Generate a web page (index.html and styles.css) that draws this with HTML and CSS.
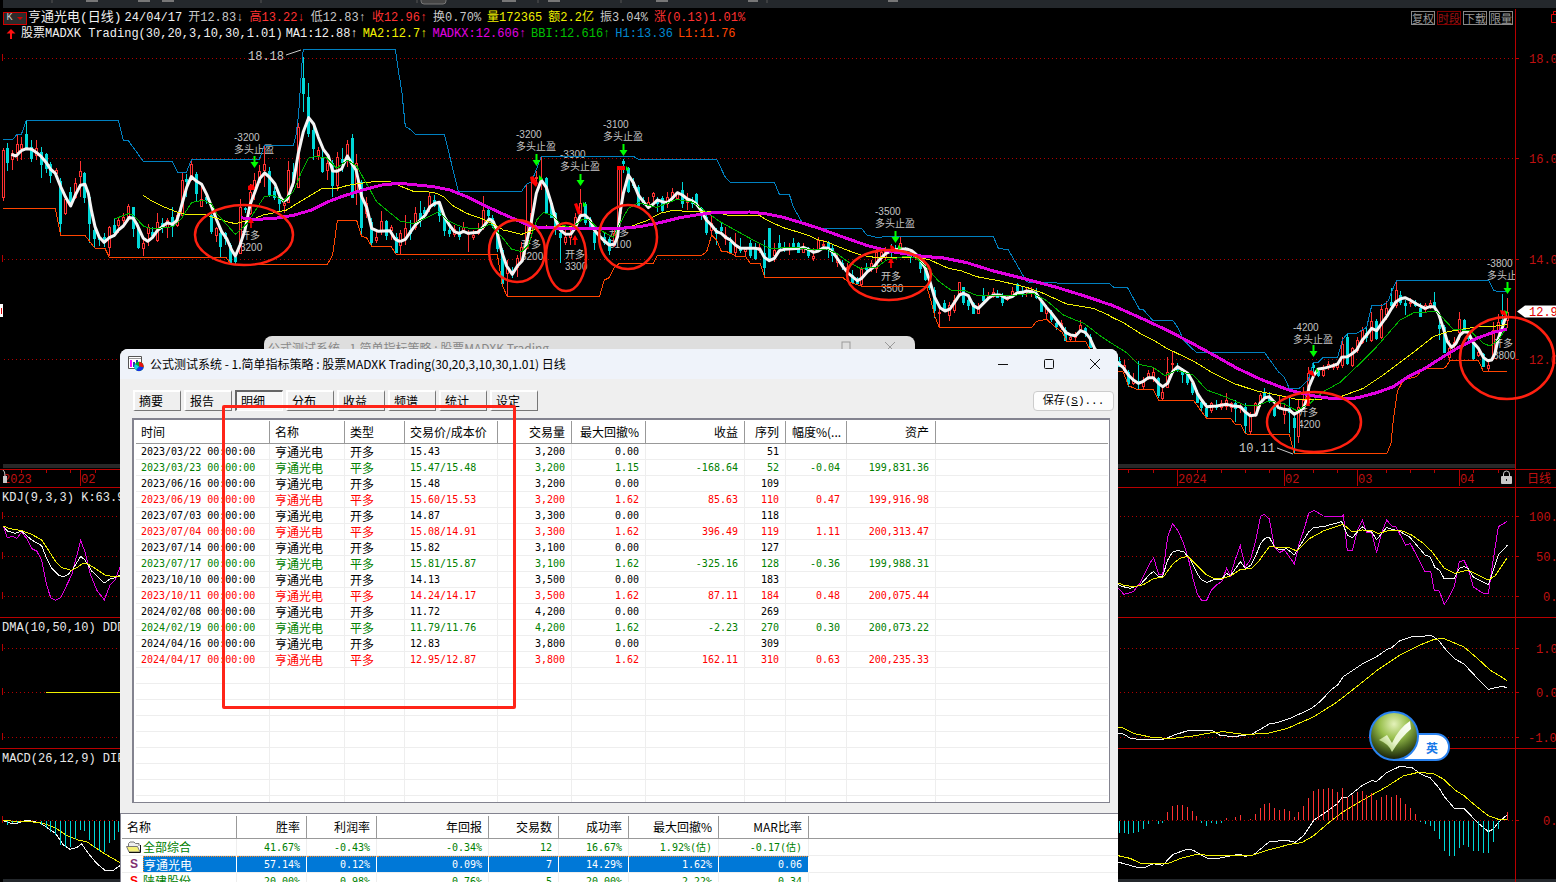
FILE: index.html
```html
<!DOCTYPE html>
<html lang="zh-CN">
<head>
<meta charset="utf-8">
<title>亨通光电 日线</title>
<link rel="stylesheet" href="styles.css">
</head>
<body>
<main class="desk">
  <svg class="chart" viewBox="0 0 1556 882" preserveAspectRatio="xMinYMin slice" role="img" aria-label="K线图">
    <defs>
      <path id="sell" d="M-.5-12h2v6h3L.5 0-3.5-6h3z"/>
      <path id="buy" d="M0 0l3 5H.8v5h-1.600v-5H-3z"/>
      <clipPath id="plot"><rect x="0" y="8" width="1515" height="874"/></clipPath>
      <radialGradient id="ball" cx=".5" cy=".25" r=".75"><stop offset="0" stop-color="#e4f2ba"/><stop offset=".4" stop-color="#98bf4c"/><stop offset=".72" stop-color="#4c6721"/><stop offset="1" stop-color="#141a08"/></radialGradient>
      <linearGradient id="tick" x1="1" y1="0" x2="0" y2="1"><stop offset="0" stop-color="#fff"/><stop offset=".6" stop-color="#e8f5cd"/><stop offset="1" stop-color="#8db844"/></linearGradient>
    </defs>
    <rect class="strip" x="3" y="0" width="1553" height="8"/>
    <path class="nubs" d="M86 0h12M138 0h12M162 0h12M502 0h14M548 0h12M656 0h12M748 0h10M888 0h10"/>
    <path class="nubs faint" d="M52 0v3M261 0v3M417 0v3M538 0v3M621 0v3M767 0v3"/>
    <rect class="nub-on" x="421" y="-6" width="25" height="10" rx="3"/>
    <rect class="strip" x="3" y="879" width="1553" height="3"/>
    <rect class="band" x="3" y="464" width="1512" height="4"/>

    <path class="dots" d="M4 58.500H1515M4 158.500H1515M4 259.500H1515M4 359.500H1515M4 516.500H1515M4 556.500H1515M4 596.500H1515M4 648.500H1515M4 692.500H1515M4 737.500H1515M4 820.500H1515"/>
    <path class="axis" d="M1515.500 9V882M0 469.500H1556M0 487.500H1556M0 617.500H1556M0 748.500H1556
      M1515 58.500h4M1515 158.500h4M1515 259.500h4M1515 359.500h4M1515 516.500h4M1515 556.500h4M1515 596.500h4M1515 648.500h4M1515 692.500h4M1515 737.500h4M1515 820.500h4
      M2.500 54v7M2.500 154v7M2.500 255v7M2.500 512v7M2.500 552v7M2.500 592v7M2.500 644v7M2.500 688v7M2.500 733v7M2.500 816v7
      M21.500 470v3M46.500 470v3M70.500 470v3M95.500 470v3M80.500 470v16M1177.500 470v16M1284.500 470v16M1357.500 470v16M1459.500 470v16
      M1128.500 470v3M1153.500 470v3M1197.500 470v3M1221.500 470v3M1245.500 470v3M1269.500 470v3M1313.500 470v3M1337.500 470v3M1386.500 470v3M1410.500 470v3M1434.500 470v3M1473.500 470v3M1498.500 470v3"/>
    <g class="scale">
      <text x="1529" y="63">18.00</text><text x="1529" y="163">16.00</text><text x="1529" y="264">14.00</text><text x="1529" y="364">12.00</text>
      <text x="1529" y="521">100.0</text><text x="1536" y="561">50.0</text><text x="1543" y="601">0.0</text>
      <text x="1536" y="653">1.00</text><text x="1536" y="697">0.00</text><text x="1528" y="742">-1.00</text><text x="1543" y="825">0.0</text>
      <text x="3" y="483">2023</text><text x="81" y="483">02</text><text x="1178" y="483">2024</text><text x="1285" y="483">02</text><text x="1358" y="483">03</text><text x="1460" y="483">04</text><text x="1527" y="483">日线</text>
    </g>
    <g class="captions"><text x="2" y="501">KDJ(9,3,3) K:63.9</text><text x="2" y="631">DMA(10,50,10) DDD</text><text x="2" y="762">MACD(26,12,9) DIF</text></g>

    <g class="notes">
      <text x="234" y="141">-3200</text><text x="234" y="153">多头止盈</text>
      <text x="516" y="138">-3200</text><text x="516" y="150">多头止盈</text>
      <text x="560" y="158">-3300</text><text x="560" y="170">多头止盈</text>
      <text x="603" y="128">-3100</text><text x="603" y="140">多头止盈</text>
      <text x="875" y="215">-3500</text><text x="875" y="227">多头止盈</text>
      <text x="1293" y="331">-4200</text><text x="1293" y="343">多头止盈</text>
      <g clip-path="url(#plot)"><text x="1487" y="267">-3800</text><text x="1487" y="279">多头止盈</text></g>
      <text x="240" y="239">开多</text><text x="240" y="251">3200</text>
      <text x="521" y="248">开多</text><text x="521" y="260">3200</text>
      <text x="565" y="258">开多</text><text x="565" y="270">3300</text>
      <text x="609" y="236">开多</text><text x="609" y="248">3100</text>
      <text x="881" y="280">开多</text><text x="881" y="292">3500</text>
      <text x="1298" y="416">开多</text><text x="1298" y="428">4200</text>
      <text x="1493" y="347">开多</text><text x="1493" y="359">3800</text>
    </g>
    <g class="peak"><text x="248" y="60">18.18</text><text x="1239" y="452">10.11</text><path d="M286 55l15-5M1277 448l16 6"/></g>

    <g id="candles"></g>

    <g class="lines" transform="scale(.33333)">
      <path class="hi" d="M10 418L39 418 50 404 64 403 79 361 355 361 370 420 385 422 430 484 517 484 533 517 559 517 575 478 778 478 793 436 880 436 888 405 896 340 908 160 911 148 1186 148 1192 190 1199 240"/>
      <path class="lo" d="M10 625L166 625 182 706 255 706 284 744 315 745 328 772 678 772 693 793 982 793 998 765 1012 661 1070 661 1085 710 1099 712 1115 739 1173 739 1188 763 1200 763"/>
      <path class="ma1" d="M34 463L48 468 64 452 79 446 95 448 110 458 124 470 139 488 151 507 166 520 182 560 197 592 212 618 226 585 241 556 255 553 265 580 275 635 285 680 297 710 312 727 328 713 343 706 355 690 370 678 388 652 400 655 410 672 430 715 443 724 457 713 472 692 487 680 502 668 517 673 530 662 541 630 560 562 574 530 590 544 605 553 620 583 636 623 650 660 665 695 680 716 695 750 706 768 720 735 735 690 750 615 765 575 780 535 794 519 808 531 825 552 840 590 850 603 862 598 880 548 895 460 910 395 926 353 941 372 955 412 970 448 985 468 998 513 1010 514 1025 507 1042 468 1055 490 1068 510 1075 540 1085 590 1100 622 1115 685 1135 694 1170 692 1185 717 1200 725"/>
      <path class="ma2" d="M430 586L455 603 490 620 530 636 560 643 610 643 650 655 680 665 706 671 730 665 763 656 790 645 860 630 900 605 965 566 1012 565 1040 557 1080 550 1140 543 1170 545 1200 558"/>
      <path class="bbi" d="M343 657L385 641 400 645 430 678 457 687 520 680 545 655 575 607 610 601 635 612 650 640 706 703 740 672 793 590 820 585 850 603 880 575 905 515 925 475 945 469 980 474 1010 505 1042 480 1070 498 1099 550 1130 605 1160 630 1200 663"/>
      <path class="mad" d="M722 653L760 658 820 656 880 646 935 630 985 605 1030 588 1100 567 1150 554 1200 550"/>
    </g>
    <g class="lines" transform="translate(400 0) scale(.33333)">
      <path class="hi" d="M0 240L6 280 16 380 30 388 46 403 133 403 175 574 365 574 380 552 395 545 424 469 700 469 715 478 950 478 975 530 991 547 1123 547 1138 583 1168 583 1180 620 1200 657"/>
      <path class="lo" d="M0 763L292 763 307 855 322 891 598 891 613 840 628 833 643 803 658 790 760 790 772 766 905 766 920 755 935 705 950 720 964 754 980 755 1010 769 1036 769 1051 790 1080 790 1094 832 1200 832"/>
      <path class="ma1" d="M0 725L16 718 30 698 46 675 61 660 76 645 90 620 105 610 118 607 133 650 148 675 163 695 178 700 190 694 205 700 235 697 250 680 268 657 280 665 290 690 305 755 320 798 337 823 352 798 367 782 379 730 394 665 409 580 424 540 439 562 454 610 467 660 481 690 497 703 513 702 526 683 541 647 555 645 570 660 583 690 600 710 613 723 628 735 643 733 653 710 660 640 670 580 685 525 700 548 715 585 730 605 745 623 760 612 772 600 787 605 802 608 817 595 832 578 847 585 862 597 877 603 889 612 904 633 919 660 934 675 950 695 964 700 977 712 991 720 1006 735 1021 745 1066 745 1080 748 1093 772 1108 782 1123 775 1138 752 1153 748 1200 745"/>
      <path class="ma2" d="M0 558L40 574 80 575 110 580 130 590 160 618 200 640 250 658 280 672 310 690 365 703 400 690 420 680 440 678 650 685 690 680 740 662 780 640 820 631 870 635 940 635 980 645 1080 647 1100 660 1150 683 1200 698"/>
      <path class="bbi" d="M0 663L40 671 75 655 115 635 145 663 190 683 240 687 270 672 305 710 335 748 365 755 385 735 410 660 430 637 460 648 485 675 515 683 545 660 565 658 600 690 640 712 660 670 685 625 715 608 770 622 830 598 880 607 915 633 960 665 1050 715 1110 745 1200 742"/>
      <path class="mad" d="M0 550L50 555 100 560 150 570 200 590 250 615 300 638 350 660 385 675 420 683 500 685 650 686 720 680 780 668 840 653 900 643 950 637 1050 636 1100 642 1150 652 1200 667"/>
    </g>
    <g class="lines" transform="translate(780 180) scale(.33333)">
      <path class="hi" d="M60 117L70 133 110 145 245 145 260 165 290 172 320 170 640 170 655 205 685 209 740 306 820 307 835 310 990 310"/>
      <path class="lo" d="M60 292L188 292 203 305 245 319 440 319 455 370 465 410 478 442 755 442 770 424 800 418 830 445 845 455 860 484 917 484 931 510 990 570"/>
      <path class="ma1" d="M60 205L70 202 85 208 100 217 115 213 130 203 145 205 160 218 175 240 190 262 205 280 220 292 232 302 245 295 262 275 280 262 300 237 318 220 340 210 358 207 380 207 395 212 410 225 421 240 436 265 450 305 463 350 480 383 495 393 510 387 523 368 538 345 550 340 565 347 580 377 595 385 610 370 625 355 640 345 660 345 680 355 697 350 712 338 727 337 740 333 755 335 768 340 784 362 800 383 815 400 830 420 845 440 857 457 872 465 887 467 901 452 916 457 930 475 945 508 990 540"/>
      <path class="ma2" d="M60 158L90 168 110 178 140 186 200 210 245 226 290 233 420 232 450 240 505 265 545 273 590 290 660 303 740 322 790 340 860 372 940 385 990 407"/>
      <path class="bbi" d="M60 204L100 210 140 207 170 220 200 243 240 265 290 262 320 240 380 228 410 235 440 262 475 303 515 332 550 330 595 348 680 348 760 340 800 362 850 405 915 432 960 467 990 487"/>
      <path class="mad" d="M60 127L120 146 200 175 260 196 330 214 400 225 430 229 490 234 560 248 640 273 740 298 830 322 920 350 990 374"/>
    </g>
    <g class="lines" transform="translate(1110 240) scale(.33333)">
      <path class="hi" d="M0 133L12 142 52 142 88 207 100 209 128 241 188 241 205 265 220 300 245 325 260 337 463 337 505 395 523 412 538 445 568 445 595 420 610 367 625 367 640 352 683 352 697 300 712 281 742 279 770 262 785 197 820 195 835 183 845 155 860 121 1136 121 1150 150 1160 154 1192 154"/>
      <path class="lo" d="M0 390L40 396 55 437 85 450 130 450 146 481 250 481 290 535 362 535 375 552 392 553 406 582 538 583 553 642 830 642 843 610 850 540 862 455 880 420 920 410 938 385 1005 384 1020 361 1105 361 1120 394 1192 394"/>
      <path class="ma1" d="M0 345L28 373 40 383 55 405 70 420 85 430 100 424 115 413 130 413 145 430 158 440 173 430 188 395 203 380 218 390 233 400 248 425 262 460 275 480 290 500 320 498 350 493 365 497 392 500 405 515 420 527 438 525 450 490 465 473 478 470 492 485 505 503 523 508 538 510 553 523 565 515 580 505 590 480 597 440 612 405 625 387 640 385 660 380 683 372 695 352 712 350 725 342 740 330 757 300 770 285 785 265 800 272 815 250 830 230 845 205 858 185 872 176 885 173 900 180 920 192 945 205 960 200 972 200 985 220 1000 265 1012 305 1025 322 1038 310 1050 285 1062 275 1075 277 1088 305 1105 325 1120 352 1133 362 1145 360 1155 340 1165 295 1178 260 1185 237 1192 228"/>
      <path class="ma2" d="M0 229L40 248 90 280 130 300 170 325 250 363 310 400 370 430 440 453 510 467 570 480 680 475 700 467 760 445 820 405 900 345 970 290 1015 275 1060 267 1100 261 1140 260 1192 254"/>
      <path class="bbi" d="M0 307L50 338 85 373 130 382 165 407 200 391 250 405 290 450 340 468 410 498 440 498 475 483 520 490 560 512 600 490 640 455 690 427 740 380 800 320 870 240 910 219 980 214 1030 268 1080 272 1120 310 1140 318 1165 300 1192 260"/>
      <path class="mad" d="M0 193L50 215 110 242 180 275 250 312 320 350 380 384 450 417 530 448 600 466 660 475 740 474 800 458 850 440 900 407 940 388 1000 350 1050 320 1100 295 1150 277 1192 267"/>
    </g>

    <g class="sell"><use href="#sell" x="254" y="168"/><use href="#sell" x="536" y="166"/><use href="#sell" x="580" y="186"/><use href="#sell" x="623" y="156"/><use href="#sell" x="895" y="243"/><use href="#sell" x="1313" y="357"/><use href="#sell" x="1507" y="294"/>
      <path d="M539 175l4 4-4 2zM583 202l4 3-4 2zM626 166l3 3-3 2zM898 245l4 3-4 2zM1316 368l3 3-3 2zM1504 310l4 2-2 4z"/></g>
    <g class="buy"><use href="#buy" x="251" y="218"/><use href="#buy" x="575" y="235"/><use href="#buy" x="891" y="258"/><use href="#buy" x="1308" y="394"/>
      <path d="M248 186l4-2 3 3-1 3h-6zM530 177l3-1 5 7-2 4-5-5zM574 204l3-1 4 9-3 3zM617 166h8v4h-8zM890 245l3 1 4 5-6 1zM1308 370l5 1 2 6-6-3zM1500 310l5 1 2 6-6-3zM1308 398l2 8h-4z"/></g>

    <g class="lines" transform="translate(0 450) scale(.33333)">
      <path class="mad thin" d="M10 228L22 263 37 259 50 265 65 247 80 265 95 296 110 303 125 330 140 405 152 443 167 451 182 443 215 375 242 272 255 305 270 370 290 420 313 450 330 405 345 390 360 352"/>
      <path class="ma1 thin" d="M10 228L22 243 45 250 65 244 95 270 125 287 140 325 155 355 175 375 190 380 205 373 220 355 242 319 255 330 275 363 313 399 330 387 345 383 360 375"/>
      <path class="ma2" d="M10 228L30 236 65 242 95 253 125 270 145 300 165 332 185 353 215 361 235 350 250 339 262 341 290 358 315 375 340 380 360 380"/>
      <path class="ma2" d="M138 727H360"/>
      <path class="ma1 thin" d="M10 1112L35 1121 55 1119 80 1111 120 1118 150 1139 167 1150 190 1185 210 1198 230 1193 245 1182 265 1210 290 1240 315 1261 340 1261 360 1247"/>
      <path class="ma2" d="M10 1112L100 1116 130 1120 165 1133 200 1156 235 1170 260 1175 315 1212 360 1238"/>
      <path class="down" d="M22 1112V1124M37 1112V1120M52 1112V1119M124 1112V1126M139 1112V1135M151 1112V1145M166 1112V1154M181 1112V1186M196 1112V1190M211 1112V1192M226 1112V1168M241 1112V1140M254 1112V1142M268 1112V1170M283 1112V1195M298 1112V1204M313 1112V1206M328 1112V1180M343 1112V1170M355 1112V1145"/>
    </g>
    <g class="lines" transform="translate(1110 490) scale(.33333)">
      <path class="mad thin" d="M15 285L42 313 70 305 90 280 118 222 131 204 146 253 158 254 173 140 188 101 204 122 220 158 236 210 250 270 262 312 275 331 290 331 305 299 320 284 335 275 350 234 361 258 376 208 391 167 406 231 422 208 436 156 452 78 462 73 478 87 493 170 508 188 523 180 540 203 553 222 568 158 580 125 596 70 612 61 640 78 695 80 700 75 712 181 727 181 742 122 757 90 770 128 785 128 800 188 815 128 830 90 845 108 858 110 887 166 901 160 945 245 962 243 973 302 988 303 1003 343 1016 323 1033 290 1048 215 1062 211 1075 238 1090 291 1120 310 1135 310 1148 220 1165 110 1192 94"/>
      <path class="ma1 thin" d="M15 279L35 289 60 295 90 285 118 254 131 244 146 260 158 258 173 210 188 186 204 181 222 186 240 207 262 252 275 270 290 277 310 270 335 267 350 250 361 258 391 215 406 235 422 226 436 200 452 160 465 145 478 142 493 170 508 180 530 176 553 195 568 170 596 126 612 112 640 110 695 95 712 135 727 143 742 126 757 110 772 124 785 126 800 149 830 112 845 118 865 122 900 142 945 195 960 200 975 233 988 240 1003 267 1033 266 1048 235 1062 230 1075 236 1090 261 1135 284 1165 195 1192 166"/>
      <path class="ma2" d="M15 275L40 285 70 290 100 284 130 266 160 261 190 220 215 202 235 200 260 225 290 255 310 264 335 266 365 256 391 238 425 236 445 215 478 170 510 172 540 174 560 183 600 145 640 123 700 103 727 126 757 120 785 121 805 131 830 123 870 120 905 135 940 160 965 184 1003 235 1033 250 1075 240 1135 270 1155 258 1192 203"/>
      <path class="ma1 thin" d="M15 728L40 732 60 744 85 748 165 747 190 736 230 723 305 721 330 736 370 740 425 733 478 702 500 698 545 683 605 655 630 635 665 598 683 585 700 560 760 520 800 500 830 479 845 473 868 453 905 440 965 437 985 450 1003 474 1035 507 1062 522 1090 552 1135 598 1175 589 1192 593"/>
      <path class="ma2" d="M15 709L40 714 70 730 120 741 180 746 250 738 300 729 340 725 400 733 470 731 530 716 610 681 680 637 740 590 800 542 870 495 930 465 970 449 1000 445 1062 471 1100 503 1140 540 1192 572"/>
      <path class="ma1 thin" d="M15 1114L50 1123 80 1132 105 1132 130 1121 158 1126 188 1094 232 1077 250 1081 290 1104 325 1105 390 1092 405 1099 430 1095 478 1055 530 1051 555 1057 580 1038 612 990 650 965 683 940 697 921 712 922 757 886 785 872 800 874 830 848 868 830 905 832 935 854 960 863 988 895 1003 920 1033 955 1062 955 1105 1000 1135 1025 1150 1017 1165 997 1192 974"/>
      <path class="ma2" d="M15 1095L60 1105 90 1119 170 1122 215 1104 260 1093 320 1098 430 1095 478 1079 540 1063 575 1058 610 1038 660 995 700 965 750 935 830 890 880 858 925 847 970 851 1000 867 1035 900 1062 917 1100 950 1135 977 1165 988 1192 987"/>
      <path class="up" d="M172 991V966M187 991V947M202 991V944M217 991V944M232 991V950M247 991V963M260 991V978M349 991V984M376 991V982M391 991V974M422 991V986M436 991V972M451 991V955M463 991V941M478 991V938M493 991V953M508 991V961M523 991V957M538 991V963M553 991V982M565 991V966M580 991V948M595 991V923M610 991V903M625 991V896M640 991V896M655 991V893M667 991V898M682 991V905M697 991V893M712 991V920M727 991V915M742 991V907M757 991V903M770 991V915M785 991V910M799 991V930M814 991V922M829 991V915M844 991V920M859 991V915M871 991V923M886 991V942M901 991V953M916 991V973M1192 991V966"/>
      <path class="down" d="M28 993V1028M43 993V1028M55 993V1031M70 993V1028M85 993V1026M100 993V1017M115 993V1002M146 993V1002M158 993V1000M275 993V998M290 993V1007M305 993V1000M320 993V1002M335 993V998M931 993V997M946 993V1002M961 993V1007M973 993V1022M988 993V1047M1003 993V1084M1018 993V1097M1033 993V1097M1048 993V1073M1062 993V1066M1075 993V1070M1090 993V1082M1105 993V1082M1120 993V1088M1135 993V1088M1150 993V1055M1165 993V1017"/>
    </g>

    <path class="tag" d="M1517 311.500l8-6h31v12h-31z"/><text class="tag-text" x="1529" y="316">12.96</text>
    <g class="rings"><ellipse cx="244" cy="235" rx="49" ry="30"/><ellipse cx="517" cy="251" rx="28" ry="31"/><ellipse cx="566" cy="257" rx="20" ry="34"/><ellipse cx="628" cy="237" rx="29" ry="32"/><ellipse cx="889" cy="275" rx="42" ry="25"/><ellipse cx="1314" cy="422" rx="47" ry="30"/><ellipse cx="1507" cy="358" rx="47" ry="41"/></g>
    <g class="lock"><rect x="1501" y="476" width="11" height="8" rx="1"/><path d="M1503.500 476v-2q0-3 3-3t3 3v2"/><rect class="hole" x="1506" y="479" width="1" height="2"/><rect x="3" y="476" width="4" height="7"/><path d="M3 470q2 1 2 6"/></g>
    <path class="left-mark" d="M0 304h3v13H0z"/><path class="left-red" d="M1.500 308v6"/>
    <path class="corner" d="M1556 14.500h-4.500v8h4.500M1553.500 14v-2.500h2.500"/>
    <g class="ime"><path d="M1394 734h42a13 13 0 0 1 0 26h-42z"/><text x="1426" y="753">英</text><circle cx="1394" cy="736" r="24"/><path class="check" d="M1379 740l8-5 5 8q7-15 18-22l1 8q-10 8-19 23-3-8-13-12z"/></g>
  </svg>

  <header class="quote">
    <div class="row first">
      <button class="kbtn" type="button" aria-label="K线类型"><span>K</span><i></i></button>
      <span class="name">亨通光电(日线)</span><span>24/04/17</span><span class="dim">开12.83↓</span><span class="rise">高13.22↓</span><span class="dim">低12.83↑</span><span class="rise">收12.96↑</span><span class="dim">换0.70%</span><span class="gold">量172365</span><span class="gold">额2.2亿</span><span class="dim">振3.04%</span><span class="rise">涨(0.13)1.01%</span>
      <nav class="tools"><button type="button">复权</button><button type="button" class="on">时段</button><button type="button">下载</button><button type="button">限量</button></nav>
    </div>
    <div class="row second">
      <svg class="uparrow" viewBox="0 0 10 10" width="10" height="10"><path d="M5 0l4.500 4.500H6V10H4V4.500H.5z"/></svg>
      <span class="formula">股票MADXK Trading(30,20,3,10,30,1.01)</span><span>MA1:12.88↑</span><span class="gold">MA2:12.7↑</span><span class="pink">MADKX:12.606↑</span><span class="green">BBI:12.616↑</span><span class="blue">H1:13.36</span><span class="orange">L1:11.76</span>
    </div>
  </header>

  <section class="ghost"><span>公式测试系统 - 1.简单指标策略 : 股票MADXK Trading</span><svg viewBox="0 0 60 14" width="60" height="14"><path d="M0 12h9M44 3l10 10M54 3l-10 10"/><rect x="1" y="3" width="8" height="8"/></svg></section>

  <section class="dialog">
    <div class="titlebar">
      <svg class="appicon" viewBox="0 0 16 16" width="16" height="16"><path fill="#fff" stroke="#555" d="M.5.5h13v12H.5z"/><path stroke="#999" d="M1 2.500h12"/><path fill="#f0f" d="M2 4h2v7H2z"/><path fill="#2233b5" d="M5 6h2v5H5zM8 4h2v5H8z"/><circle cx="11" cy="10.500" r="4.700" fill="#00aa20"/><path fill="#e81010" d="M11 10.500V5.800a4.700 4.700 0 0 1 4.600 5.500z"/><path fill="#1530e8" d="M11 10.500l4.600.8A4.700 4.700 0 0 1 8 14z"/><path fill="#14cbe8" d="M11 10.500L8 14a4.700 4.700 0 0 1-1-6z"/></svg>
      <h1>公式测试系统 - 1.简单指标策略 : 股票MADXK Trading(30,20,3,10,30,1.01) 日线</h1>
      <div class="winbtns">
        <button type="button" aria-label="最小化"><svg viewBox="0 0 12 12" width="12" height="12"><path d="M1 6.500h10"/></svg></button>
        <button type="button" aria-label="最大化"><svg viewBox="0 0 12 12" width="12" height="12"><rect x="1.500" y="1.500" width="9" height="9" rx="1"/></svg></button>
        <button type="button" aria-label="关闭"><svg viewBox="0 0 12 12" width="12" height="12"><path d="M1 1l10 10M11 1L1 11"/></svg></button>
      </div>
    </div>
    <div class="bar">
      <div class="tabs"><button type="button">摘要</button><button type="button">报告</button><button type="button" class="on">明细</button><button type="button">分布</button><button type="button">收益</button><button type="button">频谱</button><button type="button">统计</button><button type="button">设定</button></div>
      <button type="button" class="save">保存(<u>S</u>)...</button>
    </div>
    <div class="listbox">
      <table class="grid detail">
        <colgroup><col class="w134"><col class="w75"><col class="w60"><col class="w93"><col class="w74"><col class="w74"><col class="w99"><col class="w41"><col class="w61"><col class="w89"><col></colgroup>
        <thead><tr><th>时间</th><th>名称</th><th>类型</th><th>交易价/成本价</th><th>交易量</th><th>最大回撤%</th><th>收益</th><th>序列</th><th>幅度%(...</th><th>资产</th><th></th></tr></thead>
        <tbody id="trades"></tbody>
      </table>
    </div>
    <div class="summary">
      <table class="grid stats">
        <colgroup><col class="w115"><col class="w70"><col class="w70"><col class="w112"><col class="w70"><col class="w70"><col class="w90"><col class="w90"><col></colgroup>
        <thead><tr><th>名称</th><th>胜率</th><th>利润率</th><th>年回报</th><th>交易数</th><th>成功率</th><th>最大回撤%</th><th>MAR比率</th><th></th></tr></thead>
        <tbody>
          <tr><td><span class="stock"><svg viewBox="0 0 16 12" width="16" height="12"><path fill="#eee" stroke="#777" d="M2.500 5V2.500L4 1h4l1.500 1.500H13V5"/><path fill="#f5f078" stroke="#777" d="M.5 5.500h11l2.500 5.500H3z"/><path stroke="#111" d="M14.500 4v7.500H3"/></svg>全部综合</span></td><td>41.67%</td><td>-0.43%</td><td>-0.34%</td><td>12</td><td>16.67%</td><td>1.92%(估)</td><td>-0.17(估)</td><td></td></tr>
          <tr class="picked"><td><span class="stock"><b>S</b><em>亨通光电</em></span></td><td>57.14%</td><td>0.12%</td><td>0.09%</td><td>7</td><td>14.29%</td><td>1.62%</td><td>0.06</td><td></td></tr>
          <tr><td><span class="stock"><b class="red">S</b>陕建股份</span></td><td>20.00%</td><td>-0.98%</td><td>-0.76%</td><td>5</td><td>20.00%</td><td>2.22%</td><td>-0.34</td><td></td></tr>
        </tbody>
      </table>
    </div>
    <div class="marker"></div>
  </section>
</main>
<script src="app.js"></script>
</body>
</html>
```
FILE: styles.css
```css
* { box-sizing: border-box; }
body { margin: 0; background: #000; font-family: "Liberation Mono", "Noto Sans CJK SC", monospace; font-size: 12px; color: #f0f0f0; }
button { font: inherit; margin: 0; padding: 0; }
.desk { position: relative; display: grid; height: 100vh; overflow: hidden; }
.chart { grid-area: 1 / 1; width: 100%; height: 100%; min-height: 0; }
.chart text { white-space: pre; }
.strip { fill: #24282c; }
.nubs { stroke: #777; stroke-width: 4; }
.nubs.faint { stroke: #555; stroke-width: 1; }
.nub-on { fill: #454545; stroke: #777; }
.band { fill: #282828; }
.dots { stroke: #b00000; stroke-dasharray: 1 3; shape-rendering: crispEdges; }
.axis { stroke: #b80000; fill: none; shape-rendering: crispEdges; }
.scale { fill: #c01010; font-size: 12px; }
.captions { fill: #e8e8e8; font-size: 12px; }
.notes { fill: #c4c4c4; font: 10px "Liberation Sans", "Noto Sans CJK SC", sans-serif; }
.peak { fill: #c8c8c8; stroke: none; }
.peak path { stroke: #c8c8c8; }
.lines path { fill: none; vector-effect: non-scaling-stroke; stroke-width: 1px; shape-rendering: crispEdges; }
.lines .hi { stroke: #0080c0; }
.lines .lo { stroke: #ff4500; }
.lines .ma1 { stroke: #f4f4f4; stroke-width: 3px; stroke-linejoin: round; shape-rendering: auto; }
.lines .ma2 { stroke: #f0f000; }
.lines .bbi { stroke: #00b400; }
.lines .mad { stroke: #e000e0; stroke-width: 3px; }
.lines .thin { stroke-width: 1px; shape-rendering: crispEdges; }
.lines .up { stroke: #ff3232; }
.lines .down { stroke: #00d8d8; }
#candles { shape-rendering: crispEdges; }
#candles .r { stroke: #ff3232; fill: #000; }
#candles .c { stroke: #00d8d8; fill: #00d8d8; }
.sell { fill: #00ff00; }
.buy { fill: #ff0000; }
.tag { fill: #fff; }
.tag-text { fill: #e00000; }
.rings { fill: none; stroke: #ff2010; stroke-width: 2.5px; }
.lock { fill: #c8c8c8; }
.lock path { fill: none; stroke: #c8c8c8; }
.lock .hole { fill: #222; }
.left-mark { fill: #fff; }
.left-red, .corner { stroke: #e00000; fill: none; }
.ime path, .ime circle { fill: #fff; stroke: #2a83f0; stroke-width: 2px; }
.ime circle { fill: url(#ball); }
.ime .check { fill: url(#tick); stroke: none; }
.ime text { fill: #1678e8; font: bold 12px "Noto Sans CJK SC", sans-serif; }

.quote { grid-area: 1 / 1; align-self: start; z-index: 1; padding-top: 10px; line-height: 16px; white-space: nowrap; }
.row { display: flex; align-items: center; gap: 6px; height: 16px; }
.first { padding-left: 3px; padding-right: 43px; }
.kbtn { display: flex; align-items: center; justify-content: space-around; width: 24px; height: 13px; margin-right: -5px; background: #2c2c2c; border: 1px solid #d00000; color: #ccc; font-size: 10px; line-height: 10px; }
.kbtn i { border: 3px solid transparent; border-top-color: #d00000; border-bottom: 0; }
.name { font-size: 13px; margin-right: -3px; }
.second { gap: 5px; padding-left: 6px; }
.uparrow { fill: #ff1010; }
.formula { margin-right: -2px; }
.dim { color: #c8c8c8; }
.rise { color: #ff3232; }
.gold { color: #f0f000; }
.pink { color: #e000e0; }
.green { color: #00c000; }
.blue { color: #0088d0; }
.orange { color: #ff4500; }
.tools { display: flex; gap: 2px; margin-left: auto; }
.tools button { width: 24px; height: 14px; background: #000; border: 1px solid #888; color: #999; font: 11px/11px "Noto Sans CJK SC", sans-serif; }
.tools .on { color: #a01010; border-color: #800000; }

.ghost { position: absolute; left: 264px; right: 641px; top: 336px; height: 30px; display: flex; justify-content: space-between; align-items: flex-start; padding: 3px 14px 0 4px; background: #dedede; border-radius: 8px 8px 0 0; color: #888; font: 12px/18px "Noto Sans CJK SC", sans-serif; }
.ghost svg { fill: none; stroke: #999; }
.dialog { position: absolute; left: 120px; right: 438px; top: 349px; display: flex; flex-direction: column; background: #efefef; border-radius: 8px 8px 0 0; color: #000; }
.titlebar { display: flex; align-items: center; height: 30px; padding-left: 8px; background: #eff3fa; border-radius: 8px 8px 0 0; }
.titlebar h1 { margin: 0 0 0 6px; font: 12px/20px "Noto Sans CJK SC", sans-serif; white-space: nowrap; }
.appicon { fill: none; }
.winbtns { display: flex; margin-left: auto; }
.winbtns button { display: grid; place-items: center; width: 46px; height: 28px; border: 0; background: none; }
.winbtns svg { fill: none; stroke: #111; }
.bar { display: flex; justify-content: space-between; align-items: flex-end; height: 32px; padding: 0 4px 0 13px; }
.tabs { display: flex; gap: 3px; }
.tabs button { width: 48px; height: 21px; padding-left: 4px; text-align: left; color: #000; background: #efefef; border: 2px solid; border-color: #fff #777 #777 #fff; border-right-width: 1px; border-bottom-width: 1px; font: 12px/16px "Noto Sans CJK SC", sans-serif; }
.tabs .on { background: #f7f7f7; border-color: #666 #fff #fff #666; }
.save { width: 81px; height: 20px; color: #000; background: #fdfdfd; border: 1px solid #ccc; border-radius: 4px; font: 11px/16px "Liberation Mono", "Noto Sans CJK SC", monospace; }
.listbox { height: 385px; margin: 7px 8px 0 12px; padding: 1px 1px 0 2px; overflow: hidden; background: #fff; border: 2px solid #83838f; border-right-width: 1px; border-bottom-width: 1px; }
.grid { width: 100%; table-layout: fixed; border-collapse: separate; border-spacing: 0; background: #fff; }
.grid th { height: 23px; padding: 0 6px; border-right: 1px solid #999; border-bottom: 1px solid #999; font: 12px/18px "Noto Sans CJK SC", sans-serif; text-align: right; white-space: nowrap; }
.grid th:last-child { border-right: 0; }
.grid td { padding: 1px 6px 0; border-right: 1px solid #eee; border-bottom: 1px solid #eee; font: 10px/14px "DejaVu Sans Mono", "Noto Sans CJK SC", monospace; text-align: right; white-space: nowrap; vertical-align: top; }
.grid td:last-child { border-right: 0; }
.detail td { height: 16px; }
.detail td:nth-child(-n+4), .detail th:nth-child(-n+4), .stats td:first-child, .stats th:first-child { text-align: left; padding-left: 5px; }
.detail .cn { font: 12px/14px "Noto Sans CJK SC", sans-serif; }
.gain { color: #f00; }
.loss, .stats { color: #008000; }
.stats th { color: #000; }
.summary { height: 90px; margin-top: 10px; padding: 2px 0 0 1px; overflow: hidden; border-top: 1px solid #83838f; border-left: 1px solid #83838f; background: #fff; }
.stats td { height: 17px; line-height: 15px; }
.stats td:first-child { padding: 0 0 0 4px; }
.stock { display: flex; align-items: center; gap: 1px; height: 16px; font: 12px/16px "Noto Sans CJK SC", sans-serif; }
.stock svg { fill: none; }
.stock b { width: 16px; text-align: center; color: #803070; font: bold 12px/16px "Liberation Sans", sans-serif; }
.stock .red { color: #f00; }
.stock em { flex: 1; font-style: normal; background: #0078d7; height: 16px; border: 1px dotted #ff8a20; border-width: 1px 0 0 1px; line-height: 15px; }
.picked td { padding-top: 0; color: #fff; background: #0078d7; border-top: 1px dotted #ff8a20; border-right-color: #fff; }
.picked td:first-child { background: #fff; border-top: 0; }
.picked td:last-child { background: #fff; border-top: 0; }
.w134 { width: 134px; } .w75 { width: 75px; } .w60 { width: 60px; } .w93 { width: 93px; } .w74 { width: 74px; }
.w99 { width: 99px; } .w41 { width: 41px; } .w61 { width: 61px; } .w89 { width: 89px; }
.w115 { width: 115px; } .w70 { width: 70px; } .w112 { width: 112px; } .w90 { width: 90px; }
.marker { position: absolute; left: 102px; top: 56px; width: 294px; height: 304px; border: 3px solid #ff2418; border-radius: 2px; }
```
FILE: app.js
```js
// Each candle: type, x, high, body top, body bottom, low (in thirds of a pixel).
const blocks = [
  [0, 0, `r10 443 450 590 603,c22 430 445 485 513,r37 450 458 478 510,r51 405 432 455 482,r64 412 432 443 480,c79 362 402 445 448,c95 420 440 475 487,r109 420 445 465 480,c124 440 455 492 535,c139 458 462 505 520,c151 485 492 525 548,r168 505 510 520 525,c182 535 542 668 705,r197 592 598 640 644,c211 562 577 612 620,r226 533 548 590 598,r241 482 513 527 590,c254 516 518 592 608,c268 585 590 670 728,c284 660 690 715 742,c297 705 710 718 738,c313 700 712 726 742,r328 678 680 740 768,c343 655 675 695 712,r355 650 660 675 700,r370 640 650 660 680,r385 612 618 650 655,c400 620 622 685 710,c415 680 685 742 747,r430 715 728 745 768,r445 672 680 700 738,c457 680 695 705 718,r472 638 665 720 725,c487 655 668 675 700,r502 655 660 680 715,c517 622 650 675 710,r532 640 645 675 682,r547 518 541 645 650,c559 523 536 543 590,r574 478 492 535 542,c589 515 522 578 605,r604 555 598 618 622,c619 585 590 598 612,c634 640 645 692 702,r649 680 685 705 725,c661 690 700 738 770,c677 695 700 715 735,c691 730 735 788 790,c706 765 770 783 792,r721 598 622 760 762,c737 622 625 628 640,r751 553 575 640 645,r763 518 540 560 600,r778 495 512 545 550,r793 438 492 510 560,c808 500 512 585 590,c823 560 572 590 600,c838 585 590 610 635,r852 600 608 615 640,r865 484 510 605 608,c880 490 515 545 560,r895 370 380 560 565,c910 170 235 278 335,c925 250 290 400 412,c940 375 390 445 480,r954 440 450 465 480,c967 450 470 512 520,r982 480 490 510 540,c997 480 488 555 590,r1012 455 470 555 573,c1027 445 478 485 515,r1042 420 432 470 500,c1057 402 415 590 595,r1069 462 490 570 615,c1084 540 545 680 708,r1099 590 610 640 655,c1114 655 665 725 735,r1129 690 710 720 730,r1144 632 662 690 705,c1159 660 662 705 720,r1174 675 680 690 720,c1189 700 710 755 760`],
  [400, 0, `r2 690 700 735 765,r16 645 685 715 735,c30 660 690 700 720,r46 620 640 680 690,c61 603 640 655 680,c74 620 630 640 655,r88 575 588 625 635,c103 585 600 615 620,c118 605 612 645 665,c133 645 650 690 708,c148 670 690 700 710,r163 675 688 702 712,c178 680 700 708 720,r190 665 680 690 700,r205 690 700 702 755,r220 690 705 710 720,r235 670 690 700 705,r250 588 630 680 690,c265 618 630 645 655,c278 645 655 675 685,c292 680 690 745 755,c307 745 750 850 855,r322 780 800 820 890,c337 800 812 820 835,r352 765 775 800 830,r364 725 740 780 785,r379 552 670 745 750,r394 530 640 700 715,r409 513 530 535 545,r424 472 540 545 570,c439 530 535 635 640,c454 600 610 650 655,c467 635 640 685 705,c481 680 700 712 790,r496 690 710 725 735,r511 685 700 710 735,r526 640 650 675 690,r541 567 610 640 650,c556 605 612 665 675,c571 650 660 680 690,c583 675 695 725 750,c598 690 700 710 725,c613 700 710 725 735,c628 710 716 750 765,r643 690 700 735 740,r655 503 505 690 700,r661 500 505 640 650,c670 478 484 490 520,c685 500 505 572 578,c700 535 545 555 565,c715 555 562 615 620,c730 590 600 610 615,r745 590 605 615 625,r760 575 580 587 605,c772 590 605 610 635,c787 588 595 630 635,r802 575 590 610 625,r817 565 577 590 605,r832 575 580 595 600,c847 545 570 610 625,r862 580 600 605 630,c877 590 605 610 625,c889 580 582 610 618,c904 620 625 640 660,c919 640 650 695 705,r934 645 670 690 705,c949 685 690 700 735,c964 670 680 690 700,r977 680 705 715 735,c991 710 725 755 760,r1006 700 735 755 770,c1021 715 740 750 760,r1036 740 748 752 768,c1051 720 730 765 775,c1066 730 745 775 780,r1079 730 740 750 760,c1093 720 760 800 828,c1108 683 685 780 785,r1123 730 750 765 785,c1138 705 730 745 755,c1153 725 740 748 755,r1168 730 740 748 765,c1181 715 730 745 750`],
  [780, 180, `c55 185 188 215 218,r70 190 200 215 220,c85 200 210 225 235,r100 205 228 235 242,r115 172 180 210 215,r130 180 192 196 210,c145 183 186 205 235,c158 195 205 225 245,r172 225 235 245 260,c187 240 250 258 270,r202 250 262 280 300,c217 270 285 305 310,c232 290 296 308 312,r245 262 267 312 318,c260 250 265 268 275,r275 240 250 265 275,r290 208 215 265 278,r303 205 215 235 245,r317 200 212 232 240,c333 193 207 215 230,c347 195 205 212 220,r361 172 190 207 215,c377 200 205 212 220,c391 210 215 230 248,r406 220 225 232 240,c421 238 245 265 278,c436 250 260 298 302,c449 295 305 320 330,c463 320 330 390 415,r478 385 395 400 438,c493 360 368 390 395,r508 365 375 405 422,r523 345 360 390 400,r538 305 307 340 350,c550 320 322 365 375,c565 345 360 375 390,c580 365 370 398 400,r595 370 380 398 400,c610 325 345 360 370,r625 335 345 350 360,r640 325 335 348 355,c653 330 342 350 355,c667 340 350 367 377,r682 345 350 357 362,r697 320 332 345 350,c712 310 312 330 338,c727 320 335 340 350,r740 325 333 337 350,r755 320 330 340 350,c768 325 340 350 358,c784 360 365 392 395,r799 375 385 400 420,c814 390 398 418 425,c829 420 428 437 450,r844 420 428 440 450,c857 440 450 480 483,r872 465 470 478 482,r887 455 462 470 485,r901 420 435 446 455,c916 440 445 460 470,c931 462 470 500 505`],
  [1110, 240, `c28 350 362 378 380,r42 360 374 390 400,c56 390 395 430 440,r71 400 420 430 435,c86 363 423 428 448,r101 410 420 438 450,r116 390 400 415 420,r130 385 395 410 425,c146 410 413 465 475,r158 440 455 475 480,r173 352 395 440 445,r188 335 368 372 400,c203 370 380 390 395,c218 385 392 402 428,c233 395 403 425 435,c248 420 430 455 465,c262 450 460 485 490,c275 475 485 500 515,c290 490 503 528 532,r305 485 490 510 518,c320 480 495 502 510,r335 480 490 500 510,r350 460 480 498 510,r363 485 490 500 515,c377 480 490 505 545,r392 490 498 505 520,c406 490 500 555 582,r421 515 525 572 582,r436 485 490 525 530,r451 458 465 490 500,c463 445 460 470 480,c478 455 468 480 490,c493 490 500 525 530,r508 465 490 500 510,r523 490 507 523 552,c538 475 505 515 580,c553 515 535 562 640,r565 480 500 587 608,r580 440 480 505 510,r595 380 400 485 495,c610 368 375 380 400,c625 385 392 405 412,r640 375 390 405 412,r655 362 372 380 390,r671 370 377 380 390,r683 365 370 382 390,r697 290 312 375 385,c712 283 290 370 375,r727 320 325 375 380,r742 290 300 330 340,r757 260 270 305 312,c770 265 280 290 305,r785 215 242 300 305,c800 238 243 295 300,r814 193 208 292 298,r829 183 205 222 240,c844 145 185 195 205,r859 125 150 195 205,c872 152 165 185 195,c886 180 188 195 225,r902 175 185 190 200,c917 180 185 195 200,c932 190 203 228 230,r946 188 195 208 218,r961 180 188 195 208,c974 155 186 200 205,c988 240 255 265 300,c1003 255 262 335 340,r1018 300 325 352 360,r1033 290 305 315 325,r1048 215 238 275 300,c1063 236 240 270 280,c1076 275 285 295 305,c1091 300 310 355 360,r1105 330 335 345 350,c1120 338 342 378 380,r1135 365 375 385 395,r1150 245 270 355 360,r1165 222 245 270 300,c1178 163 240 250 260,r1192 175 215 240 265`]
];
let markup = "";
for (const [ox, oy, list] of blocks) {
  for (const item of list.split(",")) {
    const [x, hi, top, bottom, lo] = item.slice(1).split(" ").map(Number);
    const px = Math.floor(ox + x / 3) + 0.5;
    const y = v => Math.round(oy + v / 3);
    const h = Math.max(1, y(bottom) - y(top));
    // Rising candles are hollow, so the wick stops at the body.
    markup += `<path class="${item[0]}" d="M${px} ${y(hi)}V${y(top)}M${px} ${y(top) + h}V${y(lo)}M${px - 1} ${y(top) + 0.5}h2v${h}h-2z"/>`;
  }
}
document.getElementById("candles").innerHTML = markup;

const trades = `2023/03/22||15.43|3,200|0.00||51||
2023/03/23|loss|15.47/15.48|3,200|1.15|-168.64|52|-0.04|199,831.36
2023/06/16||15.48|3,200|0.00||109||
2023/06/19|gain|15.60/15.53|3,200|1.62|85.63|110|0.47|199,916.98
2023/07/03||14.87|3,300|0.00||118||
2023/07/04|gain|15.08/14.91|3,300|1.62|396.49|119|1.11|200,313.47
2023/07/14||15.82|3,100|0.00||127||
2023/07/17|loss|15.81/15.87|3,100|1.62|-325.16|128|-0.36|199,988.31
2023/10/10||14.13|3,500|0.00||183||
2023/10/11|gain|14.24/14.17|3,500|1.62|87.11|184|0.48|200,075.44
2024/02/08||11.72|4,200|0.00||269||
2024/02/19|loss|11.79/11.76|4,200|1.62|-2.23|270|0.30|200,073.22
2024/04/16||12.83|3,800|0.00||309||
2024/04/17|gain|12.95/12.87|3,800|1.62|162.11|310|0.63|200,235.33`;
let rows = "";
for (const line of trades.split("\n")) {
  const [date, kind, ...rest] = line.split("|");
  rows += `<tr class="${kind}"><td>${date} 00:00:00</td><td class="cn">亨通光电</td><td class="cn">${kind ? "平多" : "开多"}</td>${rest.map(v => `<td>${v}</td>`).join("")}<td></td></tr>`;
}
for (let i = 0; i < 9; i++) rows += `<tr>${"<td></td>".repeat(11)}</tr>`;
document.getElementById("trades").innerHTML = rows;
```
